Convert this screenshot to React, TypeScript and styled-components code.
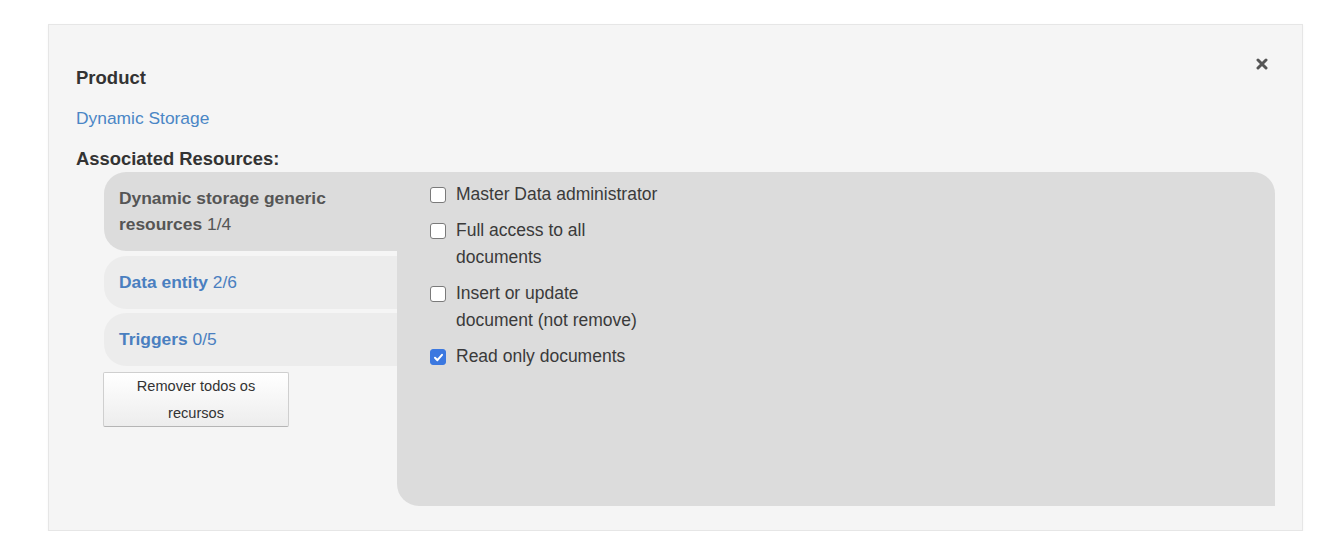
import React, { useState } from 'react'
import styled, { createGlobalStyle } from 'styled-components'

const GlobalStyle = createGlobalStyle`
  body {
    margin: 0;
    background: #fff;
    font-family: 'Liberation Sans', Arial, sans-serif;
    color: #333;
  }
`

type Resource = {
  name: string
  selected: number
  total: number
}

const resources: Resource[] = [
  { name: 'Dynamic storage generic resources', selected: 1, total: 4 },
  { name: 'Data entity', selected: 2, total: 6 },
  { name: 'Triggers', selected: 0, total: 5 },
]

const permissions = [
  { label: 'Master Data administrator', checked: false },
  { label: 'Full access to all documents', checked: false },
  { label: 'Insert or update document (not remove)', checked: false },
  { label: 'Read only documents', checked: true },
]

export default function App() {
  const [active, setActive] = useState(0)
  const [checks, setChecks] = useState(permissions.map((p) => p.checked))

  return (
    <>
      <GlobalStyle />
      <SModal>
        <SClose aria-label="close">
          <svg width="12" height="12" viewBox="0 0 12 12">
            <path
              d="M2 2 L10 10 M10 2 L2 10"
              stroke="#555"
              strokeWidth="3"
              strokeLinecap="round"
            />
          </svg>
        </SClose>
        <STitle>Product</STitle>
        <SLink href="#">Dynamic Storage</SLink>
        <SSubtitle>Associated Resources:</SSubtitle>
        <SResources>
          <SSide>
            {resources.map((r, i) => (
              <STab key={r.name} active={i === active} onClick={() => setActive(i)}>
                <b>{r.name}</b> {r.selected}/{r.total}
              </STab>
            ))}
            <SButton>Remover todos os recursos</SButton>
          </SSide>
          <SPanel>
            {permissions.map((p, i) => (
              <SCheckRow key={p.label}>
                <SBox
                  checked={checks[i]}
                  onClick={() =>
                    setChecks(checks.map((c, j) => (j === i ? !c : c)))
                  }
                >
                  {checks[i] && (
                    <svg width="11" height="11" viewBox="0 0 11 11">
                      <path
                        d="M2 5.8 L4.4 8.2 L9 2.8"
                        stroke="#fff"
                        strokeWidth="2"
                        fill="none"
                        strokeLinecap="round"
                        strokeLinejoin="round"
                      />
                    </svg>
                  )}
                </SBox>
                <SLabel>{p.label}</SLabel>
              </SCheckRow>
            ))}
          </SPanel>
        </SResources>
      </SModal>
    </>
  )
}

const SModal = styled.div`
  position: relative;
  box-sizing: border-box;
  margin: 24px 0 0 48px;
  width: 1255px;
  height: 507px;
  padding: 41px 27px 25px 27px;
  background: #f5f5f5;
  border: 1px solid #e6e6e6;
  box-shadow: 0 1px 3px rgba(0, 0, 0, 0.04);
`

const SClose = styled.div`
  position: absolute;
  top: 31px;
  right: 34px;
  width: 12px;
  height: 12px;
  cursor: pointer;
`

const STitle = styled.div`
  font-size: 18.5px;
  font-weight: bold;
  line-height: 24px;
  margin-bottom: 16px;
  color: #333;
`

const SLink = styled.a`
  display: block;
  font-size: 17.4px;
  line-height: 24px;
  margin-bottom: 17px;
  color: #4a86c5;
  text-decoration: none;
`

const SSubtitle = styled.div`
  font-size: 18.4px;
  font-weight: bold;
  line-height: 24px;
  margin-bottom: 1px;
  color: #333;
`

const SResources = styled.div`
  display: flex;
  margin-left: 28px;
  height: 334px;
`

const SSide = styled.div`
  width: 293px;
  display: flex;
  flex-direction: column;
  gap: 5px;
`

const STab = styled.div<{ active: boolean }>`
  box-sizing: border-box;
  padding: 13px 50px 14px 15px;
  font-size: 17.4px;
  line-height: 26px;
  border-radius: 22px 0 0 22px;
  cursor: pointer;
  background: ${({ active }) => (active ? '#dcdcdc' : '#ececec')};
  color: ${({ active }) => (active ? '#555' : '#4a7fc0')};
  margin-bottom: ${({ active }) => (active ? '0' : '-1px')};

  b {
    font-weight: bold;
  }
`

const SButton = styled.button`
  align-self: flex-start;
  margin: 2px 0 0 -1px;
  width: 186px;
  height: 55px;
  padding: 0 18px;
  font-family: 'Liberation Sans', Arial, sans-serif;
  font-size: 14.6px;
  line-height: 27px;
  color: #333;
  background: linear-gradient(#fff, #ededed);
  border: 1px solid #cfcfcf;
  border-bottom-color: #b5b5b5;
  border-radius: 2px;
  cursor: pointer;
`

const SPanel = styled.div`
  flex: 1;
  box-sizing: border-box;
  padding: 9px 0 0 33px;
  background: #dcdcdc;
  border-radius: 0 22px 0 22px;
`

const SCheckRow = styled.label`
  display: flex;
  align-items: flex-start;
  gap: 10px;
  margin-bottom: 9px;
  cursor: pointer;
`

const SBox = styled.span<{ checked: boolean }>`
  box-sizing: border-box;
  flex: none;
  width: 16px;
  height: 16px;
  margin-top: 6px;
  border-radius: 3px;
  display: flex;
  align-items: center;
  justify-content: center;
  background: ${({ checked }) => (checked ? '#3b78e0' : '#fff')};
  border: 1px solid ${({ checked }) => (checked ? '#3b78e0' : '#7a7a7a')};
`

const SLabel = styled.span`
  width: 203px;
  font-size: 17.5px;
  line-height: 27px;
  color: #3a3a3a;
`
